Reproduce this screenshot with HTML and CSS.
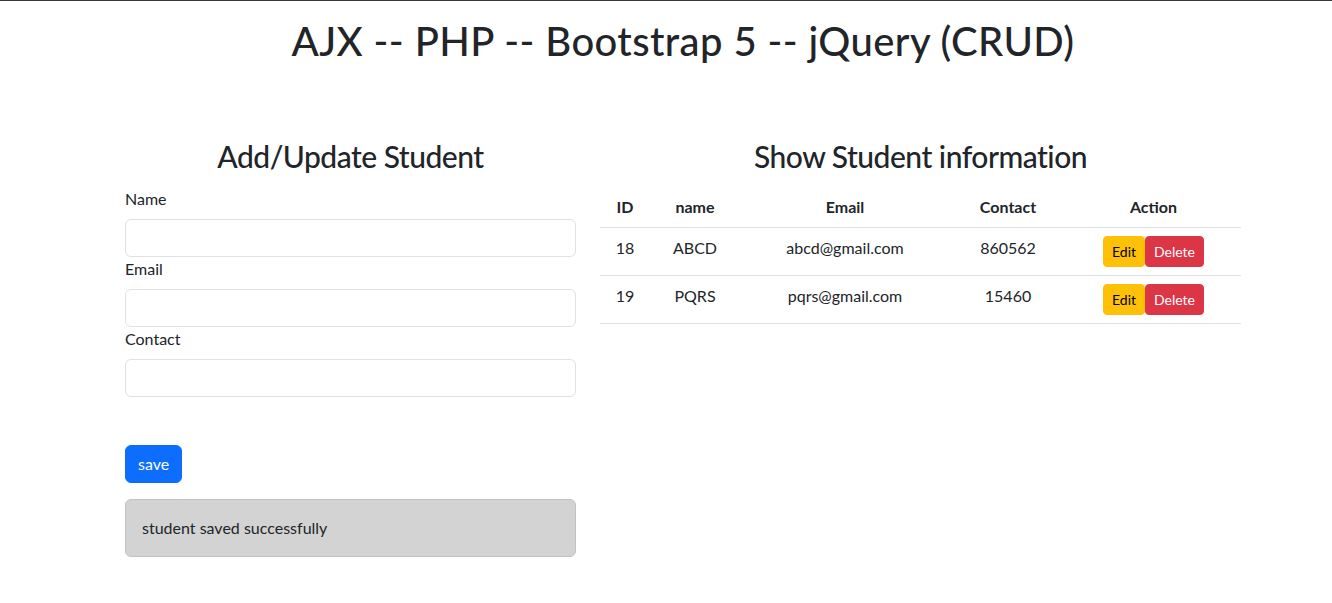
FILE: index.html
```html
<!DOCTYPE html>
<html lang="en">
<head>
<meta charset="utf-8">
<title>AJX -- PHP -- Bootstrap 5 -- jQuery (CRUD)</title>
<link rel="stylesheet" href="styles.css">
</head>
<body>
<div class="container">
  <h1 class="title">AJX -- PHP -- Bootstrap 5 -- jQuery (CRUD)</h1>
  <div class="row">
    <div class="col-form">
      <h2 class="section-title">Add/Update Student</h2>
      <form class="student-form">
        <label class="form-label" for="name">Name</label>
        <input class="form-control" type="text" id="name">
        <label class="form-label" for="email">Email</label>
        <input class="form-control" type="text" id="email">
        <label class="form-label" for="contact">Contact</label>
        <input class="form-control" type="text" id="contact">
        <div class="form-actions">
          <button type="button" class="btn btn-primary">save</button>
        </div>
      </form>
      <div class="alert">student saved successfully</div>
    </div>
    <div class="col-table">
      <h2 class="section-title">Show Student information</h2>
      <table class="table">
        <colgroup>
          <col class="c-id"><col class="c-name"><col class="c-email"><col class="c-contact"><col class="c-action">
        </colgroup>
        <thead>
          <tr><th>ID</th><th>name</th><th>Email</th><th>Contact</th><th>Action</th></tr>
        </thead>
        <tbody>
          <tr>
            <td>18</td><td>ABCD</td><td>abcd@gmail.com</td><td>860562</td>
            <td><div class="actions"><button type="button" class="btn btn-sm btn-warning">Edit</button><button type="button" class="btn btn-sm btn-danger">Delete</button></div></td>
          </tr>
          <tr>
            <td>19</td><td>PQRS</td><td>pqrs@gmail.com</td><td>15460</td>
            <td><div class="actions"><button type="button" class="btn btn-sm btn-warning">Edit</button><button type="button" class="btn btn-sm btn-danger">Delete</button></div></td>
          </tr>
        </tbody>
      </table>
    </div>
  </div>
</div>
</body>
</html>
```

FILE: styles.css
```css
* { box-sizing: border-box; }

html, body {
  margin: 0;
  padding: 0;
}

body {
  border-top: 1px solid #3a3a3a;
  font-family: Lato, "Noto Sans", sans-serif;
  font-size: 16px;
  line-height: 1.5;
  color: #212529;
  background: #fff;
  overflow-x: hidden;
}

.container {
  width: 1116px;
  margin-left: 125px;
}

.title {
  margin: 16px 0 0;
  font-size: 40px;
  font-weight: 500;
  line-height: 48px;
  letter-spacing: 0.4px;
  text-align: center;
}

.row {
  margin-top: 72px;
  display: grid;
  grid-template-columns: 451px 641px;
  column-gap: 24px;
  align-items: start;
}

.section-title {
  margin: 0 0 12px;
  font-size: 30px;
  font-weight: 500;
  line-height: 38.4px;
  letter-spacing: -0.5px;
  text-align: center;
}

.student-form {
  display: flex;
  flex-direction: column;
}

.form-label {
  display: block;
  margin-bottom: 8px;
}

.form-control {
  display: block;
  width: 100%;
  height: 38px;
  padding: 6px 12px;
  font: inherit;
  color: #212529;
  background: #fff;
  border: 1px solid #dee2e6;
  border-radius: 6px;
}

.form-actions {
  margin-top: 48px;
}

.btn {
  display: inline-block;
  font-family: inherit;
  font-size: 16px;
  line-height: 24px;
  padding: 6px 12px;
  border: 1px solid transparent;
  border-radius: 6px;
  cursor: pointer;
}

.btn-primary {
  background: #0d6efd;
  border-color: #0d6efd;
  color: #fff;
}

.btn-sm {
  font-size: 14px;
  line-height: 21px;
  padding: 4px 8px;
  border-radius: 4px;
}

.btn-warning {
  background: #ffc107;
  border-color: #ffc107;
  color: #000;
}

.btn-danger {
  background: #dc3545;
  border-color: #dc3545;
  color: #fff;
}

.alert {
  margin-top: 16px;
  padding: 16px;
  background: #d3d3d3;
  border: 1px solid #c2c2c2;
  border-radius: 6px;
}

.table {
  width: 100%;
  border-collapse: collapse;
  table-layout: fixed;
  text-align: center;
}

.c-id { width: 50px; }
.c-name { width: 90px; }
.c-email { width: 210px; }
.c-contact { width: 116px; }
.c-action { width: 175px; }

.table th,
.table td {
  padding: 8px;
  vertical-align: top;
  border-bottom: 1px solid #dee2e6;
}

.table th {
  font-weight: 700;
}

.actions {
  display: flex;
  justify-content: center;
}
```
